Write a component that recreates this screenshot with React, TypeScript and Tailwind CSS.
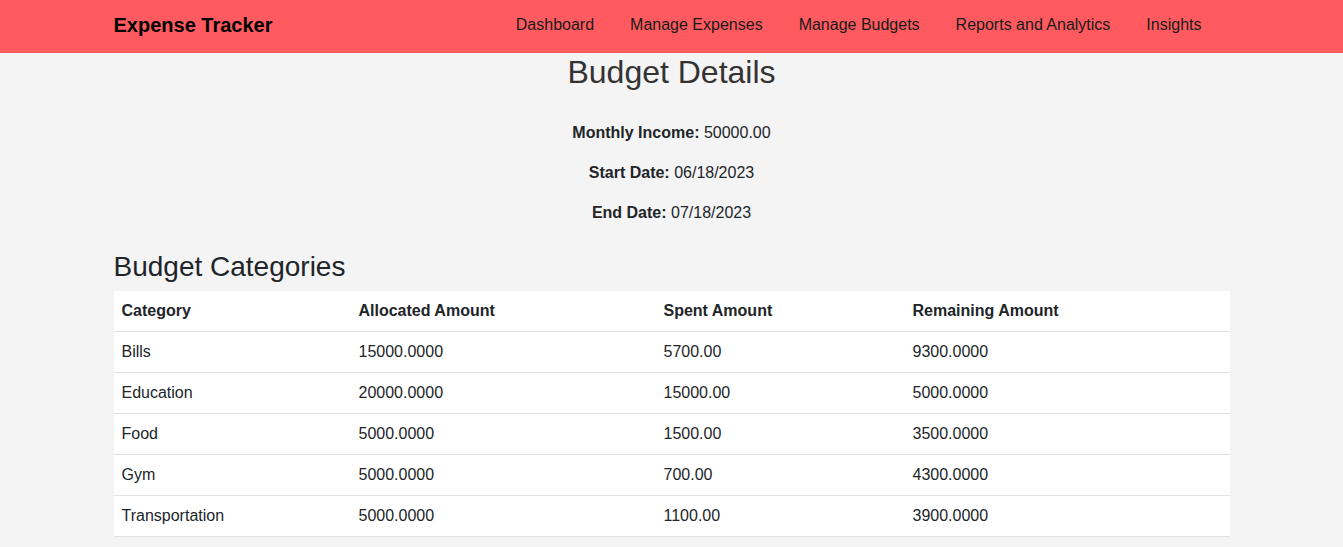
import React from 'react';

const navLinks = ['Dashboard', 'Manage Expenses', 'Manage Budgets', 'Reports and Analytics', 'Insights'];

const categories = [
  { name: 'Bills', allocated: '15000.0000', spent: '5700.00', remaining: '9300.0000' },
  { name: 'Education', allocated: '20000.0000', spent: '15000.00', remaining: '5000.0000' },
  { name: 'Food', allocated: '5000.0000', spent: '1500.00', remaining: '3500.0000' },
  { name: 'Gym', allocated: '5000.0000', spent: '700.00', remaining: '4300.0000' },
  { name: 'Transportation', allocated: '5000.0000', spent: '1100.00', remaining: '3900.0000' },
];

export default function App() {
  return (
    <div
      className="min-h-[547px] bg-[#f4f4f4] text-[#212529]"
      style={{ fontFamily: '"Liberation Sans", Arial, sans-serif' }}
    >
      {/* Navbar */}
      <nav className="h-[53px] bg-[#ff5a5f]">
        <div className="mx-auto flex h-full w-[1140px] items-center px-3 pb-[4px]">
          <span className="text-[20px] font-bold text-black">Expense Tracker</span>
          <ul className="ml-auto mr-[10px] flex items-center">
            {navLinks.map((link) => (
              <li key={link} className="px-[18px] text-[16px] text-[#1a1a1a]">
                {link}
              </li>
            ))}
          </ul>
        </div>
      </nav>

      <div className="mx-auto w-[1140px] px-3">
        {/* Budget summary */}
        <h1 className="text-center text-[32px] leading-[38px] text-[#333]">Budget Details</h1>
        <div className="mt-[30px] text-center text-[16px] leading-6">
          <p className="mb-4">
            <strong>Monthly Income:</strong> 50000.00
          </p>
          <p className="mb-4">
            <strong>Start Date:</strong> 06/18/2023
          </p>
          <p className="mb-4">
            <strong>End Date:</strong> 07/18/2023
          </p>
        </div>

        {/* Categories */}
        <h2 className="mt-[25px] mb-[7px] text-[28px] leading-[34px] text-[#212529]">Budget Categories</h2>
        <table className="w-full border-collapse bg-white text-[16px] leading-6">
          <thead>
            <tr className="border-b border-[#dee2e6]">
              <th className="w-[237px] px-2 py-2 text-left font-bold">Category</th>
              <th className="w-[305px] px-2 py-2 text-left font-bold">Allocated Amount</th>
              <th className="w-[249px] px-2 py-2 text-left font-bold">Spent Amount</th>
              <th className="px-2 py-2 text-left font-bold">Remaining Amount</th>
            </tr>
          </thead>
          <tbody>
            {categories.map((c) => (
              <tr key={c.name} className="border-b border-[#dee2e6]">
                <td className="px-2 py-2">{c.name}</td>
                <td className="px-2 py-2">{c.allocated}</td>
                <td className="px-2 py-2">{c.spent}</td>
                <td className="px-2 py-2">{c.remaining}</td>
              </tr>
            ))}
          </tbody>
        </table>
      </div>
    </div>
  );
}
